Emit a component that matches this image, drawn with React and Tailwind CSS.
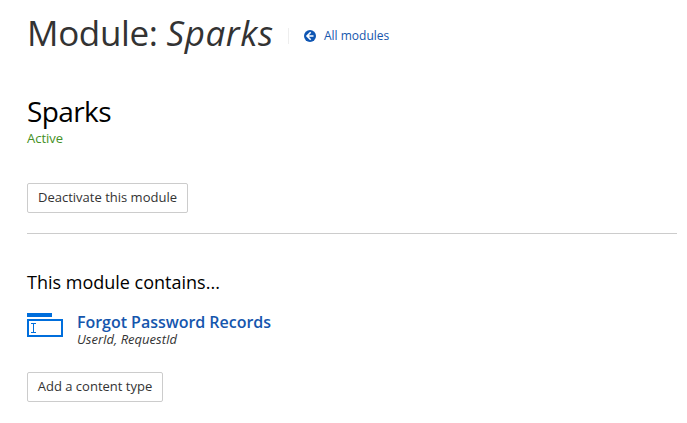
export default function App() {
  return (
    <main className="h-[423px] w-[687px] overflow-hidden bg-white pl-[27px] pr-[10px] font-['Open_Sans',sans-serif] text-[#333]">
      <header className="flex h-[68px] items-center">
        <h1 className="mb-[2px] w-[246px] text-[35px] leading-[66px] font-normal tracking-[-0.35px] whitespace-nowrap">
          Module: <em className="tracking-[0.6px]">Sparks</em>
        </h1>
        <a className="mt-[3px] ml-[15px] flex h-4 items-center border-l border-[#eee] pl-[15px] text-[12px] leading-4 text-[#1556ad]">
          <svg className="mr-2 h-3 w-3" viewBox="0 0 12 12">
            <circle cx="6" cy="6" r="6" fill="#0f56b3" />
            <path d="M6.7 2.3 3 6l3.7 3.7M3.3 6h6.2" fill="none" stroke="white" strokeWidth="1.6" />
          </svg>
          <span>All modules</span>
        </a>
      </header>
      <h2 className="mt-[25px] text-[28px] leading-[36px] tracking-[-0.6px] text-black">Sparks</h2>
      <p className="text-[13px] leading-[18px] text-[#459026]">Active</p>
      <button className="mt-[36px] block h-[30px] w-[161px] rounded-[2px] border border-[#ccc] text-[13px] whitespace-nowrap">Deactivate this module</button>
      <hr className="mt-5 border-[#ccc]" />
      <h3 className="mt-[35px] text-[18px] leading-[26px] text-black">This module contains...</h3>
      <section className="mt-[18px] flex h-[36px]">
        <svg className="mr-[14px] h-6 w-9 shrink-0" viewBox="0 0 36 24">
          <path d="M0 0h25v4H0z" fill="#006edc" />
          <path d="M1 7h34v16H1z" fill="none" stroke="#006edc" strokeWidth="2" />
          <path d="M4 10.5h5M6.5 11v8M4 19.5h5" fill="none" stroke="#006edc" />
        </svg>
        <div>
          <h4 className="text-[16px] leading-[18px] font-semibold tracking-[-0.03px] text-[#1556ad]">Forgot Password Records</h4>
          <p className="text-[13px] leading-[16px] italic">UserId, RequestId</p>
        </div>
      </section>
      <button className="mt-[23px] block h-[30px] w-[136px] rounded-[2px] border border-[#ccc] text-[13px] whitespace-nowrap">Add a content type</button>
    </main>
  );
}
